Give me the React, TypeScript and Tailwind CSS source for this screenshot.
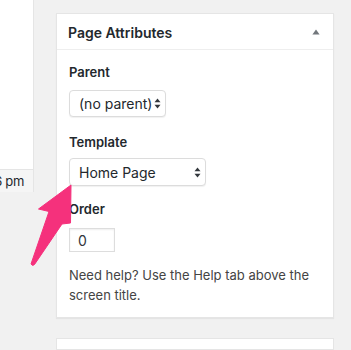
import React from "react";

const UpDown = () => (
  <svg width="7" height="11" viewBox="0 0 7 11" className="shrink-0">
    <path d="M3.5 0.5 L6.5 4.3 L0.5 4.3 Z" fill="#32373c" />
    <path d="M3.5 10.5 L6.5 6.7 L0.5 6.7 Z" fill="#32373c" />
  </svg>
);

const FakeSelect = ({ label, width }: { label: string; width: string }) => (
  <div
    className={`${width} flex items-center justify-between rounded-[4px] border border-[#dcdcdc] bg-white pl-[9px] pr-[4px] shadow-[0_1px_1px_rgba(0,0,0,0.06)] text-[14px] text-[#23282d]`}
  >
    <span>{label}</span>
    <UpDown />
  </div>
);

export default function App() {
  return (
    <div
      className="relative flex h-[350px] w-[351px] overflow-hidden bg-[#f1f1f1]"
      style={{ fontFamily: "Inter, 'Noto Sans', sans-serif" }}
    >
      {/* left column fragment */}
      <div className="flex w-[34px] shrink-0 flex-col">
        <div className="h-[169px] border-r border-[#e5e5e5] bg-white" />
        <div className="relative h-[23px] border-r border-t border-[#e5e5e5] bg-[#f5f5f5] text-[13px] text-[#23282d]">
          <span className="absolute right-[9px] top-[2px] whitespace-nowrap tracking-[-0.3px]">6 pm</span>
        </div>
      </div>

      {/* right column */}
      <div className="ml-[22px] flex w-[278px] flex-col pt-[13px]">
        <div className="border border-[#e5e5e5] bg-white shadow-[0_1px_1px_rgba(0,0,0,0.05)]">
          <div className="flex h-[36px] items-center justify-between border-b border-[#eeeeee] pl-[11px] pr-[13px]">
            <h2 className="pt-[1px] text-[14px] font-semibold text-[#23282d]">Page Attributes</h2>
            <svg width="8" height="6" viewBox="0 0 8 6">
              <path d="M4 0.5 L7.6 5.5 L0.4 5.5 Z" fill="#72777c" />
            </svg>
          </div>

          <div className="flex flex-col px-[12px] pb-[12px] pt-[13px] text-[13px] text-[#23282d]">
            <p className="h-[18px] leading-[18px] font-semibold">Parent</p>
            <div className="mt-[9px] h-[27px]">
              <FakeSelect label="(no parent)" width="w-[97px] h-[27px]" />
            </div>

            <p className="mt-[16px] h-[18px] leading-[18px] font-semibold">Template</p>
            <div className="mt-[7px] h-[28px]">
              <FakeSelect label="Home Page" width="w-[137px] h-[28px]" />
            </div>

            <p className="mt-[14px] h-[18px] leading-[18px] font-semibold">Order</p>
            <div className="mt-[10px] flex h-[24px] w-[46px] items-center border border-[#dddddd] bg-white pl-[8px] text-[14px] text-[#32373c] shadow-[inset_0_1px_2px_rgba(0,0,0,0.07)]">
              0
            </div>

            <p className="mt-[14px] text-[13px] leading-[19.5px] text-[#444444]">
              Need help? Use the Help tab above the screen title.
            </p>
          </div>
        </div>

        <div className="mt-[20px] h-[40px] border border-[#e5e5e5] bg-white" />
      </div>

      {/* annotation arrow */}
      <svg
        className="pointer-events-none absolute left-0 top-0"
        width="351"
        height="350"
        viewBox="0 0 351 350"
      >
        <path
          d="M71 185 L38.5 209 L49 211.5 L31 264 Q32.5 266.5 34.5 264.5 L62 224 L70.5 223 Z"
          fill="#f5317c"
          stroke="#f5317c"
          strokeWidth="1"
          strokeLinejoin="round"
        />
      </svg>
    </div>
  );
}
